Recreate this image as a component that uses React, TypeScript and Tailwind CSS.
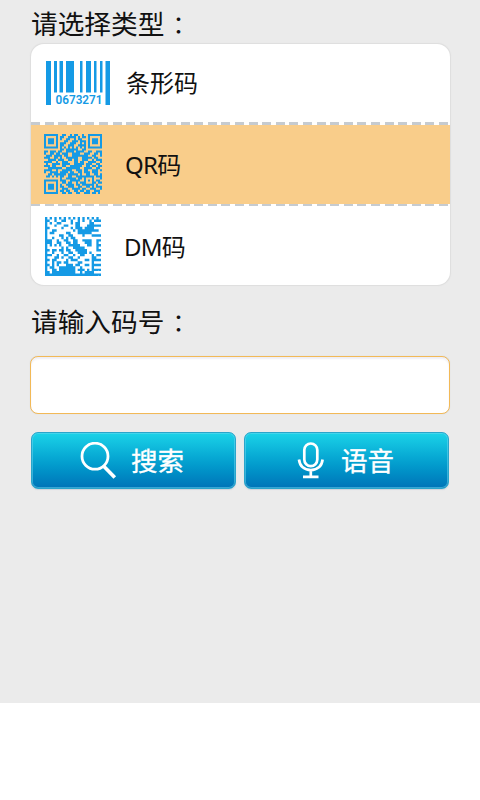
import type { ReactNode } from "react";

const BLUE = "#159ae5";

const QR = [
  "#######..##..#.##..#..#######",
  "#.....#.##..####.#.##.#.....#",
  "#.###.#.#..##..#.##...#.###.#",
  "#.###.#...##..###.###.#.###.#",
  "#.###.#.###..###..#.#.#.###.#",
  "#.....#.##..###..####.#.....#",
  "#######.#.#.#.#.#.#.#.#######",
  "........##.######..##........",
  "##.###.##..####.####..##..###",
  "#..##.##.###..####..###..##.#",
  ".###.####.##..########..##..#",
  "###..##.#..######..#####.##..",
  "..####.###..##.##..###..#.###",
  "####..#..###...##.##..####..#",
  ".#..####.####..#####.###..##.",
  "###.##...##..######..##.##.##",
  "..#######..#######..####..##.",
  "####..#..#####..###.##..###.#",
  "#..####.####.##..##.###.###..",
  "..##.######.#####.#..##..##.#",
  ".##.#.#.##..##..#########.###",
  "........#..#####.##.#...#...#",
  "#######.###..#####..#.#.#.##.",
  "#.....#..##.##..#.###...##.##",
  "#.###.#.#..####.##.######.#..",
  "#.###.#.##..###..##..##.#.###",
  "#.###.#..###..####.##..###..#",
  "#.....#.##.##..##.##.##..###.",
  "#######..##.##..##..###.##.#.",
];

const DM = [
  "#.#.#.#.#.#.#.#.#.#.#.#.",
  "##..#..##..#..#.#..#.###",
  "#.#..##....#.##....##...",
  "#...#...##...##...######",
  "##.....#...#.###.####...",
  "#..##.......#.#########.",
  "#.##.....##...######....",
  "#.....##..##....#...####",
  "#..#...#.#.##...........",
  "###..#..##..##..####..##",
  "###..##..##.##...###..#.",
  "#.#.#.#...#####...##..##",
  "#......#.#..#####.....#.",
  "##.##.##.##..#####....##",
  "#..#...#..##..####.#....",
  "###..#..##..#..##...#.##",
  "#...##.#..##..#.....##..",
  "##.##....#.###...##.####",
  "#..#.##.##....##....#...",
  "##.#.#...###.##..##.####",
  "#.##..#######..#....#...",
  "#..##.#######.###.#.####",
  "##.##########..#.####...",
  "########################",
];

function Matrix({ rows, className }: { rows: string[]; className: string }) {
  const path = rows
    .flatMap((row, y) => [...row].map((cell, x) => (cell === "#" ? `M${x} ${y}h1v1h-1z` : "")))
    .join("");
  return (
    <svg className={className} viewBox={`0 0 ${rows[0].length} ${rows.length}`} preserveAspectRatio="none">
      <path d={path} fill={BLUE} />
    </svg>
  );
}

function Barcode() {
  const bars = [[8, 3], [13.5, 3.5], [20, 8], [34, 2.5], [40, 5], [48, 2.5], [54, 2.5]];
  return (
    <svg className="h-[44px] w-[64px] overflow-visible" viewBox="0 0 64 44" fill={BLUE}>
      <rect width="5" height="44" />
      <rect x="59.5" width="4.5" height="44" />
      {bars.map(([x, width]) => (
        <rect key={x} x={x} width={width} height="31.5" />
      ))}
      <text x="9.5" y="43.3" fontSize="12.5" fontWeight="600" textLength="47" lengthAdjust="spacingAndGlyphs" fontFamily="Roboto, sans-serif">
        0673271
      </text>
    </svg>
  );
}

function Dashes() {
  return (
    <div className="h-[2.5px] shrink-0 bg-[repeating-linear-gradient(90deg,#c6cbd0_0px,#c6cbd0_9px,#fff_9px,#fff_13.6px)]" />
  );
}

function Heading({ children }: { children: ReactNode }) {
  return (
    <h2 className="flex h-[40px] items-center text-[26.7px] leading-[40px] text-[#111]">
      {children}
      <span className="pl-[8px] text-[24px]">：</span>
    </h2>
  );
}

const BUTTON =
  "flex h-[57px] items-center rounded-[7px] border border-[#2aa5cb] bg-linear-to-b from-[#1bd3e8] to-[#0074b8] text-[26.5px] font-medium text-white shadow-[inset_0_0_0_1px_rgba(110,215,240,0.5),0_1px_1px_#d0d4dc]";

export default function App() {
  return (
    <div className="h-[800px] w-[480px] overflow-hidden bg-white font-['Noto_Sans','Noto_Sans_CJK_SC',sans-serif]">
      <main className="h-[703px] bg-[#ebebeb] pr-[30px] pl-[31px] pt-[4px]">
        <Heading>请选择类型</Heading>
        <ul className="flex h-[241px] flex-col overflow-hidden rounded-[13px] bg-white text-[24px] text-[#111] shadow-[0_0_1px_0.5px_#dedede]">
          <li className="flex h-[78px] items-center pl-[15px]">
            <Barcode />
            <span className="ml-[16px]">条形码</span>
          </li>
          <Dashes />
          <li className="flex h-[79px] items-center bg-[#f9cd8a] pl-[13px]">
            <Matrix rows={QR} className="h-[60px] w-[58px]" />
            <span className="ml-[23px] pt-[2px] tracking-[-0.7px]">QR码</span>
          </li>
          <Dashes />
          <li className="flex h-[79px] items-center pl-[14px] pt-px">
            <Matrix rows={DM} className="h-[59px] w-[56px]" />
            <span className="ml-[23px] pt-px tracking-[-0.8px]">DM码</span>
          </li>
        </ul>
        <div className="mt-[17px]">
          <Heading>请输入码号</Heading>
        </div>
        <input
          aria-label="请输入码号"
          className="-ml-px mt-[14px] block h-[58px] w-[420px] rounded-[8px] border-[1.5px] border-[#f2b957] bg-white px-3 text-2xl shadow-[inset_0_2px_2px_#eeeef5,0_0_1px_#ccc] outline-none"
        />
        <div className="mt-[18px] grid grid-cols-[205px_205px] gap-[8px]">
          <button className={`${BUTTON} pl-[48px]`}>
            <svg className="h-[38px] w-[38px]" viewBox="0 0 38 38" fill="none" stroke="white" strokeWidth="2.8">
              <circle cx="15" cy="14.2" r="13" />
              <path d="M24 24.4 34.8 35.6" strokeWidth="3.6" />
            </svg>
            <span className="ml-[13px] pt-[3px] font-normal [-webkit-text-stroke:0.35px_white]">搜索</span>
          </button>
          <button className={`${BUTTON} pl-[52px]`}>
            <svg className="h-[38px] w-[28px]" viewBox="0 0 28 38" fill="none" stroke="white" strokeWidth="2.7">
              <rect x="7.3" y="1.5" width="13" height="22.6" rx="6.5" />
              <path d="M2 17.5c.7 6.7 5.4 10.6 11.8 10.6s11.1-3.9 11.8-10.6M13.8 28v7M6 34.9h15.5" />
            </svg>
            <span className="ml-[16px] pt-[3px] font-normal [-webkit-text-stroke:0.35px_white]">语音</span>
          </button>
        </div>
      </main>
    </div>
  );
}
